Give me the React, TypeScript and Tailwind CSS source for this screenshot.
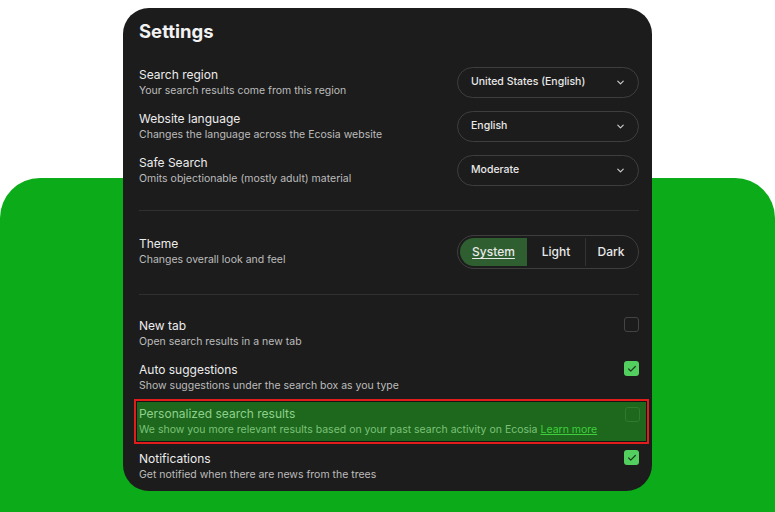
import { ChevronDown, Check } from 'lucide-react'

const FONT = { fontFamily: 'Inter, "Noto Sans", sans-serif' }

const SELECTS = [
  { title: 'Search region', sub: 'Your search results come from this region', value: 'United States (English)' },
  { title: 'Website language', sub: 'Changes the language across the Ecosia website', value: 'English' },
  { title: 'Safe Search', sub: 'Omits objectionable (mostly adult) material', value: 'Moderate' },
]

function Label({ title, sub }: { title: string; sub: React.ReactNode }) {
  return (
    <div className="flex flex-col">
      <p className="text-[12px] leading-[16px] text-[#ececec]">{title}</p>
      <p className="text-[10.5px] leading-[15px] text-[#bdbdbd]">{sub}</p>
    </div>
  )
}

function Select({ value }: { value: string }) {
  return (
    <div className="flex h-[31px] w-[182px] items-center justify-between rounded-full border border-[#3e3e3e] pr-[12px] pl-[13px] text-[10.5px] font-medium text-[#e8e8e8]">
      {value}
      <ChevronDown size={11} strokeWidth={2.5} className="text-[#cfcfcf]" aria-hidden />
    </div>
  )
}

// Aligned with the title line, not the row centre.
function Checkbox({ checked, dim }: { checked?: boolean; dim?: boolean }) {
  if (checked) {
    return (
      <span className="mt-[6px] grid size-[15px] shrink-0 place-items-center self-start rounded-[3px] bg-[#52cf5f]">
        <Check size={10} strokeWidth={3} className="text-[#1e3d20]" aria-hidden />
      </span>
    )
  }
  return (
    <span
      className={
        dim
          ? 'mt-[5px] block size-[15px] shrink-0 self-start rounded-[3px] border-[1.5px] border-[#2f7a2f]'
          : 'mt-[6px] block size-[15px] shrink-0 self-start rounded-[3px] border-[1.5px] border-[#444]'
      }
    />
  )
}

export default function App() {
  return (
    <div className="grid min-h-[512px] bg-white" style={FONT}>
      <div className="col-start-1 row-start-1 mt-[178px] rounded-t-[40px] bg-[#0bab19]" />

      <div className="col-start-1 row-start-1 mt-[8px] ml-[123px] flex h-[483px] w-[529px] flex-col self-start rounded-[26px] bg-[#1c1c1c] pt-[11px] pr-[13px] pl-4">
        <h1 className="text-[18.5px] leading-[24px] font-bold text-[#f2f2f2]">Settings</h1>

        <div className="mt-[17px] flex flex-col">
          {SELECTS.map((s) => (
            <div key={s.title} className="flex h-[44px] items-center justify-between">
              <Label title={s.title} sub={s.sub} />
              <Select value={s.value} />
            </div>
          ))}
        </div>

        <div className="mt-[18px] h-px bg-[#303030]" />

        <div className="mt-[18px] flex h-[44px] items-center justify-between">
          <Label title="Theme" sub="Changes overall look and feel" />
          <div className="mt-[2px] flex h-[34px] w-[182px] items-stretch rounded-full border border-[#3e3e3e] p-[2px] text-[12px] font-medium text-[#e8e8e8]">
            <span className="flex w-[67px] items-center justify-center rounded-l-full bg-[#2f5e30] underline underline-offset-2">
              System
            </span>
            <span className="flex w-[59px] items-center justify-center border-r border-[#333]">Light</span>
            <span className="flex flex-1 items-center justify-center">Dark</span>
          </div>
        </div>

        <div className="mt-[21px] h-px bg-[#303030]" />

        <div className="mt-[16px] flex flex-col">
          <div className="flex h-[44px] items-center justify-between">
            <Label title="New tab" sub="Open search results in a new tab" />
            <Checkbox />
          </div>
          <div className="flex h-[44px] items-center justify-between">
            <Label title="Auto suggestions" sub="Show suggestions under the search box as you type" />
            <Checkbox checked />
          </div>
          <div className="-mr-[10px] -ml-[5px] h-[45px] border-[2.5px] border-[#e21b1b] bg-[#151515] p-px">
            <div className="flex h-full items-center justify-between bg-[#1d681c] pr-[6px] pl-[2px]">
              <div className="flex flex-col">
                <p className="text-[12px] leading-[16px] text-[#8fd08c]">Personalized search results</p>
                <p className="text-[10.5px] leading-[15px] text-[#7cc279]">
                  We show you more relevant results based on your past search activity on Ecosia{' '}
                  <span className="text-[#3fcf3c] underline">Learn more</span>
                </p>
              </div>
              <Checkbox dim />
            </div>
          </div>
          <div className="flex h-[44px] items-center justify-between">
            <Label title="Notifications" sub="Get notified when there are news from the trees" />
            <Checkbox checked />
          </div>
        </div>
      </div>
    </div>
  )
}
